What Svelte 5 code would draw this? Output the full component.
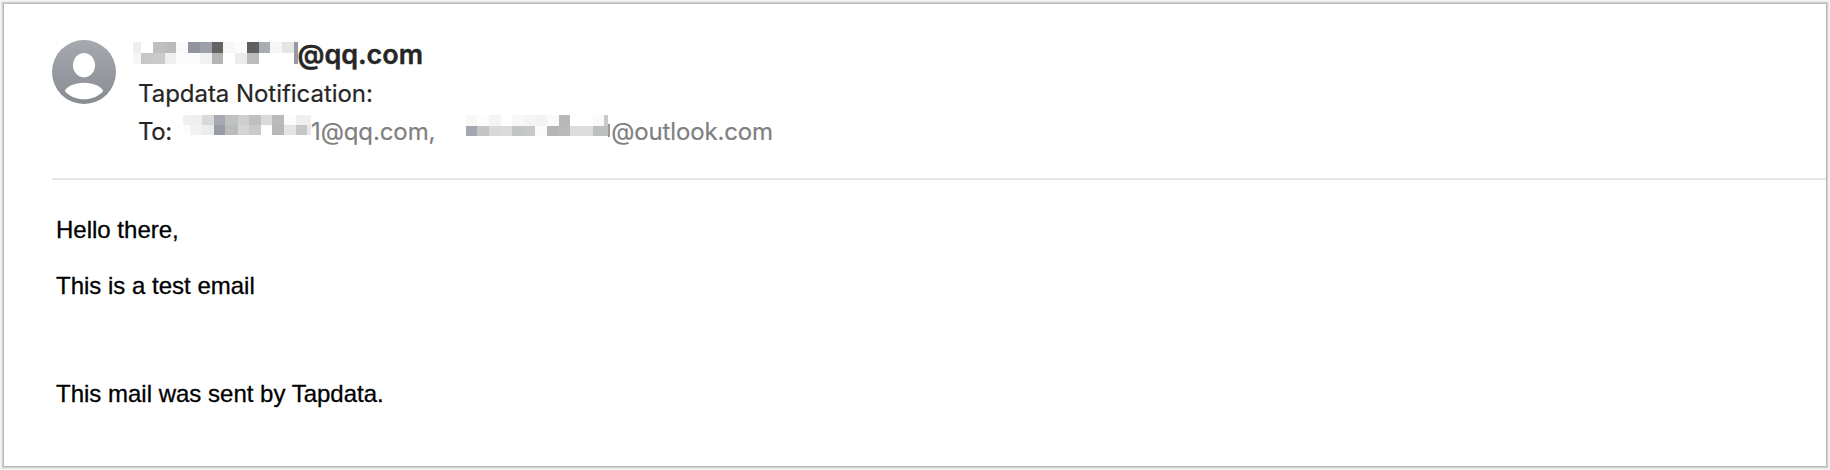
<script>
  // Each mask: column edges, row edges, and one colour per cell ("" leaves the cell empty).
  const masks = {
    sender: {
      xs: [0, 8, 20, 31.7, 43.3, 55, 67, 78.7, 90.3, 102, 113.7, 125.7, 137.3, 149, 160.7, 164.5],
      ys: [0, 11, 21.5],
      rows: [
        ['#eee', '', '#bebfbf', '#babbbb', '#fafafa', '#9193a0', '#9da0a9', '#636364', '#f7f7f7', '#fcfcfc', '#5f6060', '#aaacb4', '#f6f6f6', '#e5e5e5', '#9699a2'],
        ['#f6f6f6', '#c6c7c7', '#cacaca', '#efefef', '#fcfcfc', '#fcfcfc', '#f2f2f2', '#b3b4b4', '', '#ececec', '#bbb', '', '', '', '#9699a2']
      ]
    },
    first: {
      xs: [0, 7.3, 19, 30.7, 42.3, 54.7, 66.3, 78, 89, 101.3, 113, 124, 128],
      ys: [0, 10, 20],
      rows: [
        ['#f1f1f1', '#efefef', '#d9d9d9', '#a6a8b2', '#c0c1c1', '#cfcfcf', '#bfbfbf', '#dadada', '#b9bbba', '#fcfcfc', '#efefef', '#efefef'],
        ['#fdfdfd', '#f2f2f2', '#ececec', '#9a9ba8', '#babbbb', '#d4d4d4', '#cacaca', '', '#b5b8b7', '#e3e5e4', '#c5c6c6', '#e8e8e8']
      ]
    },
    second: {
      xs: [0, 11.3, 23, 34.7, 46, 57.7, 69.3, 81, 92.7, 104, 115.7, 127, 138, 142.3],
      ys: [0, 10.7, 21],
      rows: [
        ['#f8f8f8', '#fdfdfd', '#f4f4f4', '', '#f8f8f8', '#f5f5f5', '#f3f3f3', '#fafafa', '#b7b9b8', '', '', '#fafafa', '#c9caca'],
        ['#a5a7b0', '#c4c5c5', '#d8d8d8', '#dadada', '#c4c5c5', '#c7c8c8', '#fbfbfb', '#b4b6b5', '#b9bbba', '#dcdcdc', '#dcdcdc', '#bec0bf', '#bec0bf']
      ]
    }
  };
</script>

{#snippet mosaic(m, name)}
  <svg class="mosaic {name}" width={m.xs.at(-1)} height={m.ys.at(-1)} shape-rendering="crispEdges" aria-hidden="true">
    {#each m.rows as row, r}
      {#each row as fill, c}
        {#if fill}
          <rect x={m.xs[c]} y={m.ys[r]} width={m.xs[c + 1] - m.xs[c]} height={m.ys[r + 1] - m.ys[r]} {fill} />
        {/if}
      {/each}
    {/each}
  </svg>
{/snippet}

<main class="window">
  <header class="head">
    <svg class="avatar" viewBox="0 0 64 64" width="64" height="64" aria-hidden="true">
      <defs>
        <linearGradient id="tone" x1="0" y1="0" x2="0" y2="1">
          <stop offset="0" stop-color="#a6a9af" />
          <stop offset="1" stop-color="#888b91" />
        </linearGradient>
      </defs>
      <circle cx="32" cy="32" r="32" fill="url(#tone)" />
      <ellipse cx="32" cy="25.2" rx="11" ry="12.2" fill="#fff" />
      <path d="M12.8 51C15 46.5 22 42.8 32 42.8S49 46.5 51.2 51C46.5 56.3 39.5 59.3 32 59.3S17.5 56.3 12.8 51Z" fill="#fff" />
    </svg>
    <div class="meta">
      <div class="line sender-line">
        {@render mosaic(masks.sender, 'm-sender')}<span class="sender">@qq.com</span>
      </div>
      <div class="line subject"><span>Tapdata Notification:</span></div>
      <div class="line to-line">
        <span class="to">To:</span>
        {@render mosaic(masks.first, 'm-to')}
        <span class="addr a1">1@qq.com,</span>
        {@render mosaic(masks.second, 'm-to')}
        <i class="stem"></i>
        <span class="addr a2">@outlook.com</span>
      </div>
    </div>
  </header>
  <section class="body">
    <p>Hello there,</p>
    <p>This is a test email</p>
    <p class="foot">This mail was sent by Tapdata.</p>
  </section>
</main>

<style>
  :global(body) {
    background: #f5f5f5;
    overflow: hidden;
  }
  :global(#app) {
    display: flow-root;
  }
  .window {
    box-sizing: border-box;
    width: 1822px;
    height: 462px;
    margin: 4px;
    background: #fff;
    box-shadow: 0 0 0 1px #b9b9b9, 0 0 0 2px #d3d3d3, 0 0 0 3px #e8e8e8;
    overflow: hidden;
  }
  .head {
    display: flex;
    box-sizing: border-box;
    height: 176px;
    margin-left: 48px;
    padding-top: 36px;
    border-bottom: 2px solid #e6e6e6;
    font-family: Inter, sans-serif;
    color: #262626;
  }
  .avatar {
    flex: none;
  }
  .meta {
    margin-left: 17px;
    margin-top: -5px;
  }
  .line {
    display: flex;
    white-space: nowrap;
    font-size: 24px;
    line-height: 42px;
    height: 38px;
    letter-spacing: -0.04px;
    -webkit-text-stroke: 0.2px;
  }
  .mosaic {
    flex: none;
    display: block;
  }
  .m-sender {
    margin-top: 7px;
  }
  .sender {
    font-size: 27px;
    line-height: 40px;
    font-weight: 600;
    letter-spacing: -0.05px;
    -webkit-text-stroke: 0.4px;
  }
  .subject,
  .to-line {
    padding-left: 5px;
  }
  .to {
    width: 45px;
    letter-spacing: -0.4px;
  }
  .m-to {
    margin-top: 4px;
  }
  .addr {
    color: #808080;
  }
  .a1 {
    width: 155px;
    letter-spacing: -0.1px;
  }
  .stem {
    width: 2px;
    height: 13px;
    margin: 13px 1px 0 0;
    background: #999;
  }
  .a2 {
    letter-spacing: -0.15px;
  }
  .body {
    padding: 36px 0 0 52px;
    font-family: "Liberation Sans", Arial, sans-serif;
    font-size: 24px;
    line-height: 28px;
    color: #000;
    -webkit-text-stroke: 0.3px;
  }
  p {
    margin: 0 0 28px;
  }
  .foot {
    margin-top: 80px;
  }
</style>
